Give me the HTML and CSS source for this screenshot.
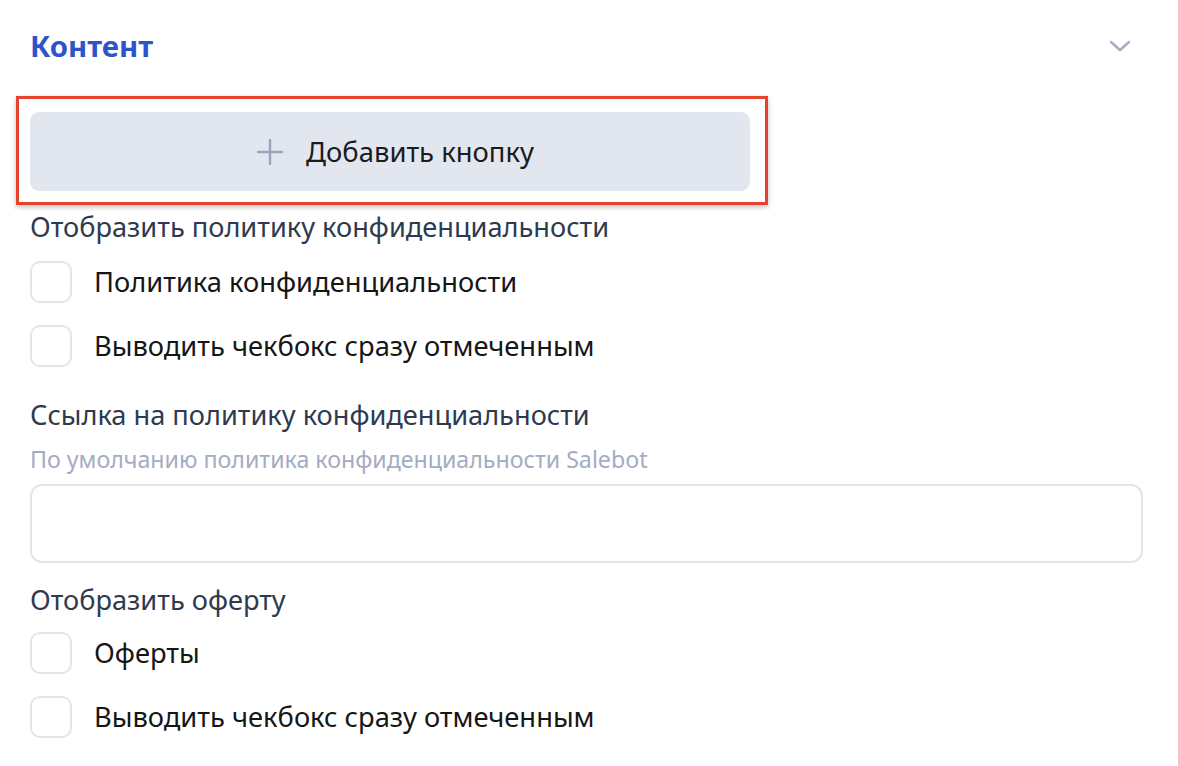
FILE: index.html
```html
<!DOCTYPE html>
<html lang="ru">
<head>
  <meta charset="UTF-8" />
  <title>Контент</title>
  <link rel="stylesheet" href="styles.css">
</head>
<body>
  <div class="panel">
    <div class="panel-head">
      <h2>Контент</h2>
      <svg class="chevron" width="22" height="12" viewBox="0 0 22 12">
        <path d="M2 2 L11 10 L20 2" fill="none" stroke="#a3acc2" stroke-width="2.4" stroke-linecap="round" stroke-linejoin="round"/>
      </svg>
    </div>

    <div class="add-wrap">
      <button class="add-btn">
        <svg width="28" height="28" viewBox="0 0 28 28">
          <path d="M14 2 V26 M2 14 H26" stroke="#9aa5bb" stroke-width="2.4" stroke-linecap="round"/>
        </svg>
        <span>Добавить кнопку</span>
      </button>
      <div class="highlight"></div>
    </div>

    <div class="group">
      <div class="label">Отобразить политику конфиденциальности</div>
      <label class="check"><span class="box"></span>Политика конфиденциальности</label>
      <label class="check"><span class="box"></span>Выводить чекбокс сразу отмеченным</label>
    </div>

    <div class="group field">
      <div class="label">Ссылка на политику конфиденциальности</div>
      <div class="hint">По умолчанию политика конфиденциальности Salebot</div>
      <input type="text" class="text-input" />
    </div>

    <div class="group offer">
      <div class="label">Отобразить оферту</div>
      <label class="check"><span class="box"></span>Оферты</label>
      <label class="check"><span class="box"></span>Выводить чекбокс сразу отмеченным</label>
    </div>
  </div>
</body>
</html>
```

FILE: styles.css
```css
:root {
  --blue: #2b55c9;
  --slate: #2e3a4f;
  --muted: #a3acc2;
  --line: #e0e5ee;
  --btn-bg: #e2e6ef;
}

* {
  box-sizing: border-box;
}

body {
  margin: 0;
  background: #fff;
  font-family: 'Noto Sans', sans-serif;
  color: #161616;
}

.panel {
  padding: 20px 35px 0 30px;
}

.panel-head {
  display: flex;
  justify-content: space-between;
  align-items: center;
  height: 52px;
}

.panel-head h2 {
  margin: 0;
  font-size: 29.4px;
  font-weight: 700;
  color: var(--blue);
}

.chevron {
  margin-right: 12px;
}

.add-wrap {
  position: relative;
  width: 720px;
  margin-top: 40px;
}

.add-btn {
  width: 100%;
  height: 79px;
  display: flex;
  align-items: center;
  justify-content: center;
  gap: 22px;
  padding: 0 0 0 10px;
  border: none;
  border-radius: 9px;
  background: var(--btn-bg);
  font-family: inherit;
  font-size: 27.4px;
  color: #1b1b1b;
}

.highlight {
  position: absolute;
  top: -16px;
  left: -14px;
  right: -18px;
  bottom: -14px;
  border: 3px solid #e5432e;
  box-shadow: 0 2px 5px rgba(0,0,0,0.25);
  pointer-events: none;
}

.group {
  margin-top: 18px;
}

.label {
  font-size: 27.2px;
  line-height: 36px;
  color: var(--slate);
}

.check {
  display: flex;
  align-items: center;
  gap: 22px;
  margin-top: 16px;
  font-size: 27.3px;
  line-height: 42px;
}

.check + .check {
  margin-top: 22px;
}

.box {
  width: 42px;
  height: 42px;
  border: 2px solid var(--line);
  border-radius: 10px;
}

.field {
  margin-top: 30px;
}

.hint {
  margin-top: 10px;
  font-size: 23.2px;
  line-height: 32px;
  color: var(--muted);
}

.text-input {
  display: block;
  width: 1113px;
  height: 79px;
  margin-top: 9px;
  border: 2px solid var(--line);
  border-radius: 12px;
}

.offer {
  margin-top: 19px;
}

.offer .check:first-of-type {
  margin-top: 14px;
}
```
